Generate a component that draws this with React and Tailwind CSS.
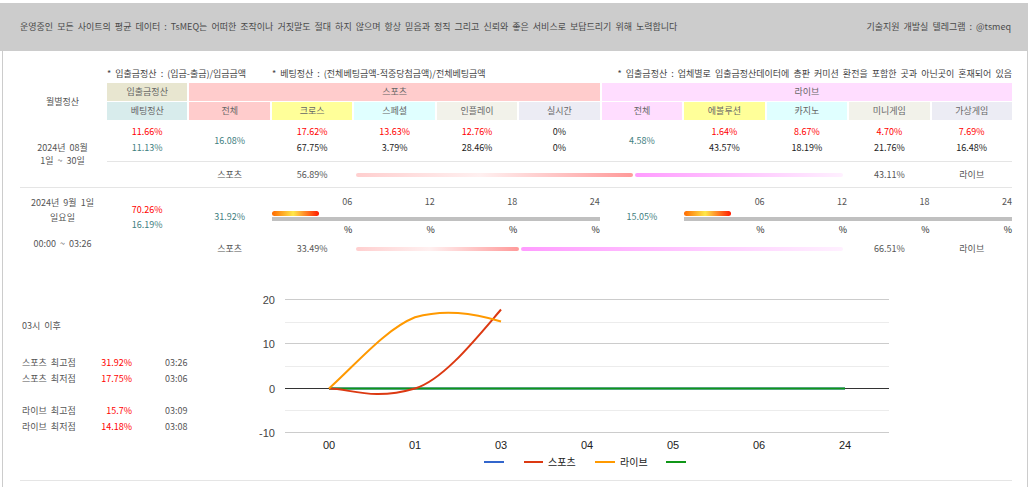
import React from 'react';

const cols = 'grid grid-cols-[85px_repeat(11,minmax(0,1fr))] gap-x-[2px]';

const subHeads = [
  ['전체', 'bg-[#ffcccc]'],
  ['크로스', 'bg-[#ffff99]'],
  ['스페셜', 'bg-[#e0ffff]'],
  ['인플레이', 'bg-[#f2f2ea]'],
  ['실시간', 'bg-[#ececf4]'],
  ['전체', 'bg-[#ffddff]'],
  ['에볼루션', 'bg-[#ffff99]'],
  ['카지노', 'bg-[#e0ffff]'],
  ['미니게임', 'bg-[#f2f2ea]'],
  ['가상게임', 'bg-[#ececf4]'],
];

const sports = [
  ['17.62%', '67.75%'],
  ['13.63%', '3.79%'],
  ['12.76%', '28.46%'],
  ['0%', '0%', true],
];

const live = [
  ['1.64%', '43.57%'],
  ['8.67%', '18.19%'],
  ['4.70%', '21.76%'],
  ['7.69%', '16.48%'],
];

function PairCell({ top, bottom, plain }) {
  return (
    <div className="pt-[4px] text-center leading-[16px]">
      <div className={plain ? 'text-[#222]' : 'text-[#ff0000]'}>{top}</div>
      <div className="text-[#222]">{bottom}</div>
    </div>
  );
}

function SplitRow({ sportsPct, livePct }) {
  return (
    <>
      <div className="flex items-center justify-center text-[#555]">스포츠</div>
      <div className="flex items-center justify-center text-[#555]">{sportsPct}%</div>
      <div className="col-span-6 flex items-center gap-[2px] pl-[2px] pr-[4px]">
        <div
          className="h-[4px] rounded-full bg-[linear-gradient(to_right,#ffcfcf,#fff0f0_45%,#ff9a9a)]"
          style={{ width: `${sportsPct}%` }}
        />
        <div className="h-[4px] flex-1 rounded-full bg-[linear-gradient(to_right,#ff9cff,#fff0ff)]" />
      </div>
      <div className="flex items-center justify-center text-[#555]">{livePct}%</div>
      <div className="flex items-center justify-center text-[#555]">라이브</div>
    </>
  );
}

function Timeline({ pct }) {
  return (
    <div className="col-span-4 pt-[7px]">
      <div className="grid grid-cols-4 gap-x-[2px] text-right leading-[14px] text-[#555]">
        {['06', '12', '18', '24'].map((t) => (
          <div key={t}>{t}</div>
        ))}
      </div>
      <div
        className="mt-[2px] h-[5px] rounded-full bg-[linear-gradient(to_right,#ff6a00,#ffe84a_45%,#ff1a00)]"
        style={{ width: `${pct}%` }}
      />
      <div className="mt-[1px] h-[4px] bg-[#c0c0c0]" />
      <div className="mt-[2px] grid grid-cols-4 gap-x-[2px] text-right leading-[14px] text-[#222]">
        {[0, 1, 2, 3].map((i) => (
          <div key={i}>%</div>
        ))}
      </div>
    </div>
  );
}

function Chart() {
  const y = (v) => 103.5 - 4.45 * v;
  const xs = [74, 160, 246, 332, 418, 504, 590];
  const labels = ['00', '01', '03', '04', '05', '06', '24'];
  return (
    <svg width="756" height="195" className="block shrink-0">
      {[37.5, 81.5, 125.5].map((g) => (
        <line key={g} x1="30" x2="634" y1={g} y2={g} stroke="#ececec" />
      ))}
      {[14.5, 58.5, 147.5].map((g) => (
        <line key={g} x1="30" x2="634" y1={g} y2={g} stroke="#cccccc" />
      ))}
      <line x1="30" x2="634" y1="103.5" y2="103.5" stroke="#333333" />
      <g fontFamily="'Liberation Sans', Arial, sans-serif" fontSize="11" fill="#444">
        {[
          [14.5, '20'],
          [58.5, '10'],
          [103.5, '0'],
          [147.5, '-10'],
        ].map(([g, t]) => (
          <text key={t} x="20" y={g + 4} textAnchor="end">
            {t}
          </text>
        ))}
      </g>
      <g fontFamily="'Liberation Sans', Arial, sans-serif" fontSize="11" fill="#222">
        {xs.map((x, i) => (
          <text key={x} x={x} y="164" textAnchor="middle">
            {labels[i]}
          </text>
        ))}
      </g>
      <line x1="74" x2="590" y1="103.5" y2="103.5" stroke="#3366cc" strokeWidth="2" />
      <line x1="74" x2="590" y1="103.5" y2="103.5" stroke="#109618" strokeWidth="2" />
      <path
        d={`M74,103.5 C95,103.5 117,116 160,103.5 C188,95 220,55 246,${y(17.75)}`}
        fill="none"
        stroke="#dc3912"
        strokeWidth="2"
      />
      <path
        d={`M74,103.5 C103,77 131,44 160,${y(16)} C189,24 217,28 246,${y(15.05)}`}
        fill="none"
        stroke="#ff9900"
        strokeWidth="2"
      />
      <g fontFamily="'Noto Sans CJK KR', sans-serif" fontSize="10" fill="#222">
        <line x1="229" x2="249" y1="177" y2="177" stroke="#3366cc" strokeWidth="2" />
        <line x1="269" x2="288" y1="177" y2="177" stroke="#dc3912" strokeWidth="2" />
        <text x="293" y="180.5">스포츠</text>
        <line x1="340" x2="360" y1="177" y2="177" stroke="#ff9900" strokeWidth="2" />
        <text x="365" y="180.5">라이브</text>
        <line x1="411" x2="431" y1="177" y2="177" stroke="#109618" strokeWidth="2" />
      </g>
    </svg>
  );
}

const peaks = [
  ['스포츠 최고점', '31.92%', '03:26'],
  ['스포츠 최저점', '17.75%', '03:06'],
  ['라이브 최고점', '15.7%', '03:09'],
  ['라이브 최저점', '14.18%', '03:08'],
];

function PeakRow({ row }) {
  return (
    <div className="flex leading-[16px]">
      <div className="w-[75px] text-[#555]">{row[0]}</div>
      <div className="w-[35px] text-right text-[#ff0000]">{row[1]}</div>
      <div className="ml-[33px] text-[#555]">{row[2]}</div>
    </div>
  );
}

export default function App() {
  return (
    <div className="flex min-h-screen w-[1028px] flex-col bg-white pt-[3px] font-['Noto_Sans_CJK_KR',sans-serif] text-[9px] [word-spacing:2px]">
      <div className="flex h-[48px] items-center justify-between bg-[#cccccc] pl-[20px] pr-[17px] text-[#4a4a4a]">
        <div>
          운영중인 모든 사이트의 평균 데이터 : TsMEQ는 어떠한 조작이나 거짓말도 절대 하지 않으며 항상 믿음과 정직 그리고
          신뢰와 좋은 서비스로 보답드리기 위해 노력합니다
        </div>
        <div>기술지원 개발실 텔레그램 : @tsmeq</div>
      </div>

      <div className="ml-[2px] flex-1 border-x border-[#cccccc] pl-[17px] pr-[15px] pt-[15px]">
        {/* notes */}
        <div className={`${cols} h-[16px] items-center whitespace-nowrap leading-[16px] text-[#444]`}>
          <div className="col-start-2 col-span-2">* 입출금정산 : (입금-출금)/입금금액</div>
          <div className="col-span-4">* 베팅정산 : (전체베팅금액-적중당첨금액)/전체베팅금액</div>
          <div className="col-span-5 text-right">
            * 입출금정산 : 업체별로 입출금정산데이터에 총판 커미션 환전을 포함한 곳과 아닌곳이 혼재되어 있음
          </div>
        </div>

        {/* header */}
        <div className={`${cols} mt-[1px] grid-rows-[18px_18px] gap-y-[1px] text-center leading-[18px] text-[#666]`}>
          <div className="row-span-2 flex items-center justify-center text-[#555]">월별정산</div>
          <div className="bg-[#e8e6d0]">입출금정산</div>
          <div className="col-span-5 bg-[#ffcccc]">스포츠</div>
          <div className="col-span-5 bg-[#ffddff]">라이브</div>
          <div className="bg-[#d8ecec]">베팅정산</div>
          {subHeads.map(([t, bg], i) => (
            <div key={i} className={bg}>
              {t}
            </div>
          ))}
        </div>

        {/* monthly */}
        <div className={`${cols} grid-rows-[41px_26px] border-b border-[#e5e5e5]`}>
          <div className="row-span-2 flex flex-col items-center justify-center leading-[13px] text-[#555]">
            <div>2024년 08월</div>
            <div>1일 ~ 30일</div>
          </div>
          <div className="pt-[4px] text-center leading-[16px]">
            <div className="text-[#ff0000]">11.66%</div>
            <div className="text-[#3f8080]">11.13%</div>
          </div>
          <div className="flex items-center justify-center text-[#3f8080]">16.08%</div>
          {sports.map(([a, b, plain], i) => (
            <PairCell key={i} top={a} bottom={b} plain={plain} />
          ))}
          <div className="flex items-center justify-center text-[#3f8080]">4.58%</div>
          {live.map(([a, b], i) => (
            <PairCell key={i} top={a} bottom={b} />
          ))}
          <div className="col-start-2 col-span-11 grid grid-cols-subgrid border-t border-[#e5e5e5]">
            <div />
            <SplitRow sportsPct={56.89} livePct={43.11} />
          </div>
        </div>

        {/* today */}
        <div className={`${cols} grid-rows-[50px_22px]`}>
          <div className="row-span-2 pt-[7px] text-center leading-[15px] text-[#555]">
            <div>2024년 9월 1일</div>
            <div>일요일</div>
            <div className="mt-[11px]">00:00 ~ 03:26</div>
          </div>
          <div className="pt-[14px] text-center leading-[15px]">
            <div className="text-[#ff0000]">70.26%</div>
            <div className="text-[#3f8080]">16.19%</div>
          </div>
          <div className="pt-[21px] text-center leading-[15px] text-[#3f8080]">31.92%</div>
          <Timeline pct={14.3} />
          <div className="pt-[21px] text-center leading-[15px] text-[#3f8080]">15.05%</div>
          <Timeline pct={14.3} />
          <div className="col-start-2 col-span-11 grid grid-cols-subgrid">
            <div />
            <SplitRow sportsPct={33.49} livePct={66.51} />
          </div>
        </div>

        {/* chart */}
        <div className="mt-[25px] flex h-[196px] border-b border-[#e5e5e5]">
          <div className="w-[235px] shrink-0 pl-[2px] pt-[33px]">
            <div className="leading-[16px] text-[#555]">03시 이후</div>
            <div className="mt-[21px]">
              <PeakRow row={peaks[0]} />
              <PeakRow row={peaks[1]} />
            </div>
            <div className="mt-[16px]">
              <PeakRow row={peaks[2]} />
              <PeakRow row={peaks[3]} />
            </div>
          </div>
          <Chart />
        </div>
      </div>
    </div>
  );
}
